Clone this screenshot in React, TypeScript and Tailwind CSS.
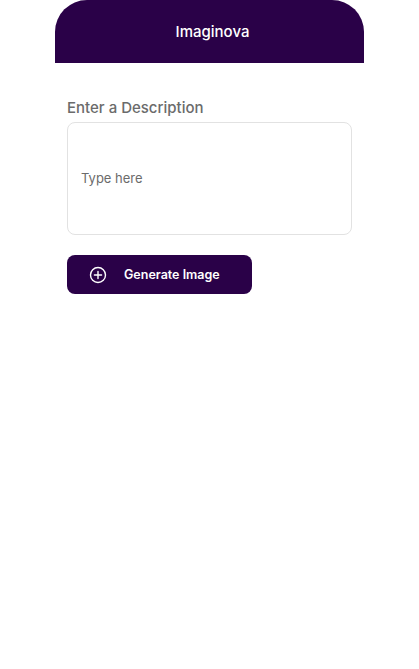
const App = () => {
  return (
    <div className="min-h-[669px] bg-white flex justify-center font-['Inter',sans-serif]">
      <div className="w-[309px]">
        <header className="h-[63px] bg-[#2a0148] rounded-t-[32px] flex items-center justify-center pl-[6px] pt-[1px]">
          <h1 className="text-[15px] font-medium text-white">Imaginova</h1>
        </header>
        <main className="px-3 pt-[36px]">
          <label className="block text-[15px] leading-[18px] font-medium text-[#6b6b6b] mb-[5px]">
            Enter a Description
          </label>
          <div className="h-[113px] w-[285px] border border-[#e2e2e2] rounded-[8px] flex items-center px-[13px]">
            <span className="text-[13px] text-[#6b6b6b]">Type here</span>
          </div>
          <button className="mt-[20px] h-[39px] w-[185px] bg-[#2a0148] rounded-[8px] flex items-center pl-[22px] text-white">
            <svg width="18" height="18" viewBox="0 0 18 18" fill="none" stroke="currentColor" strokeWidth="1.4" strokeLinecap="round">
              <circle cx="9" cy="9" r="7.5" />
              <path d="M9 5.4v7.2M5.4 9h7.2" />
            </svg>
            <span className="ml-[17px] pt-[1px] text-[12.5px] font-semibold">Generate Image</span>
          </button>
        </main>
      </div>
    </div>
  );
};

export default App;
